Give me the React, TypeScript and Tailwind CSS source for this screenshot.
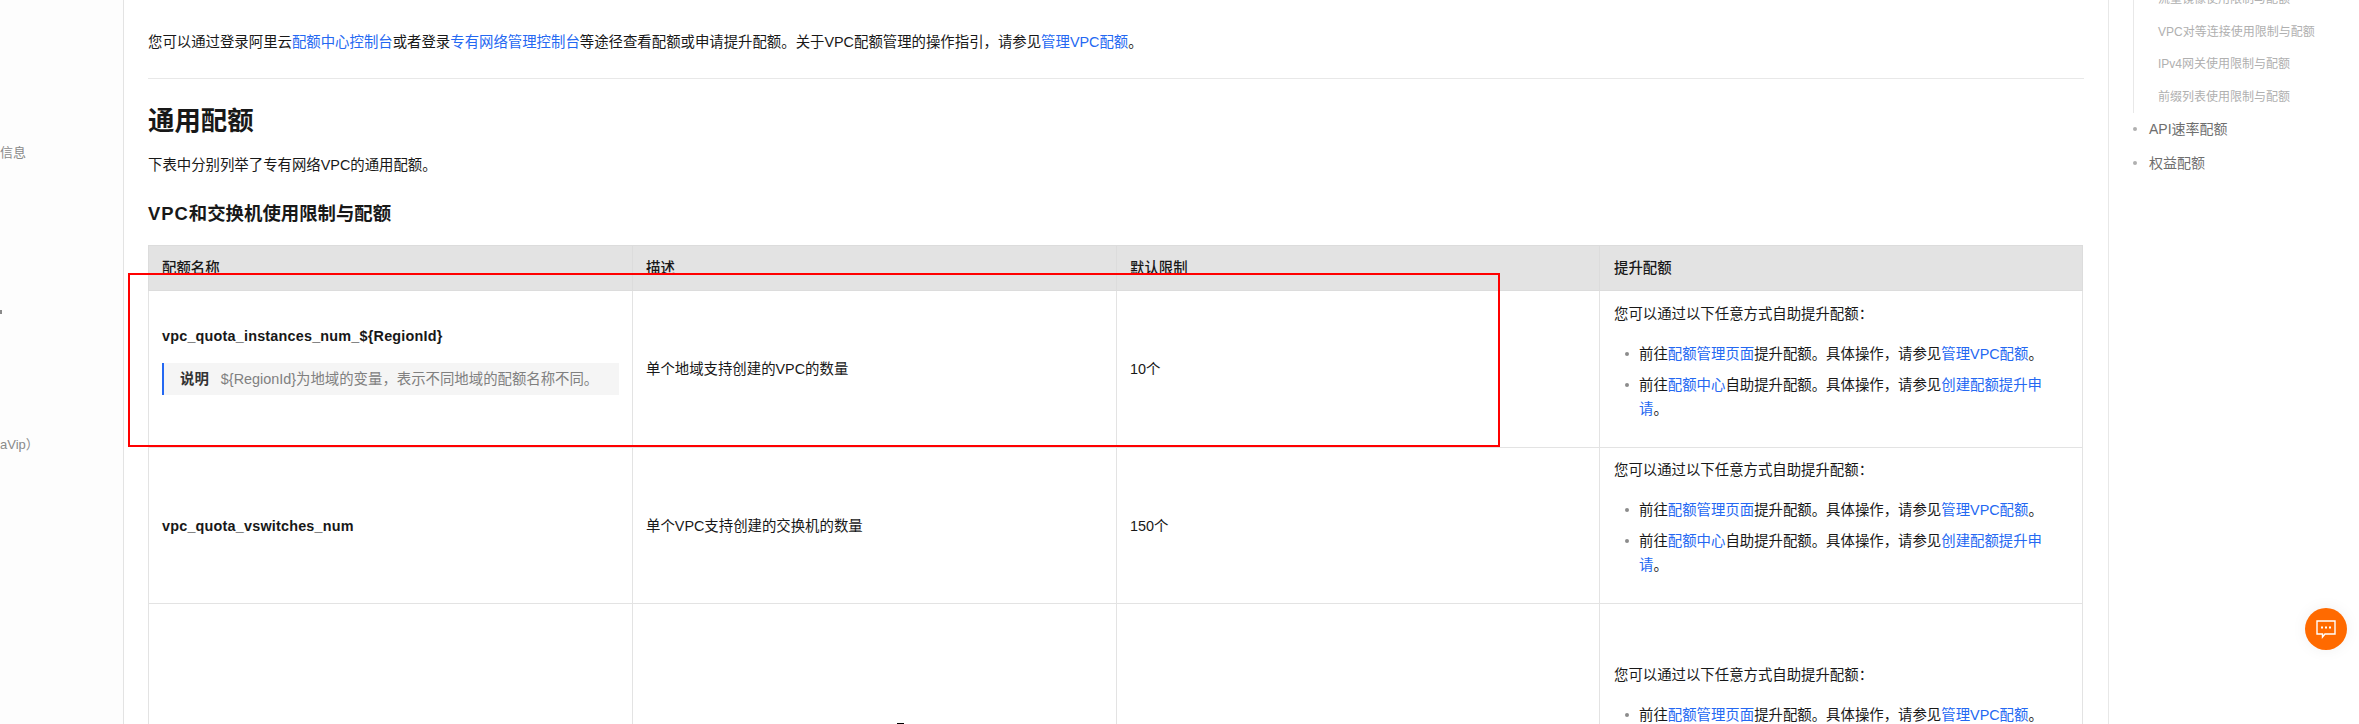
import React from 'react';

const FONT = '[font-family:"Liberation_Sans","Noto_Sans_CJK_SC",sans-serif]';

const A = ({ children }: { children: React.ReactNode }) => <a className="text-[#2468f2]">{children}</a>;

const UpgradeCell = () => (
  <div className="pb-[16px] text-[14.4px] leading-[24px] text-[#181818]">
    <p className="mb-[16px]">您可以通过以下任意方式自助提升配额：</p>
    <ul className="flex flex-col gap-[7px] pl-[25px]">
      <li className="relative">
        <span className="absolute left-[-14px] top-[10px] size-[4px] rounded-full bg-[#8c8c8c]"></span>
        前往<A>配额管理页面</A>提升配额。具体操作，请参见<A>管理VPC配额</A>。
      </li>
      <li className="relative">
        <span className="absolute left-[-14px] top-[10px] size-[4px] rounded-full bg-[#8c8c8c]"></span>
        前往<A>配额中心</A>自助提升配额。具体操作，请参见<A>创建配额提升申请</A>。
      </li>
    </ul>
  </div>
);

const LeftNav = () => (
  <aside className="w-[124px] h-full shrink-0 border-r border-[#e3e3e3] bg-[#fdfdfd] text-[13px] leading-[20px] text-[#8a8a8a] overflow-hidden">
    <div className="mt-[143px] whitespace-nowrap">信息</div>
    <div className="mt-[147px] h-[4px] w-[2px] bg-[#8a8a8a]"></div>
    <div className="mt-[121px] whitespace-nowrap">aVip）</div>
  </aside>
);

const RightNav = () => (
  <aside className="w-[251px] h-full shrink-0 border-l border-[#e8e8e8] overflow-hidden pl-[24px]">
    <ul className="-mt-[17px] border-l border-[#e8e8e8] pl-[24px] text-[12px] leading-[32.5px] text-[#b0b0b0]">
      <li>流量镜像使用限制与配额</li>
      <li>VPC对等连接使用限制与配额</li>
      <li>IPv4网关使用限制与配额</li>
      <li>前缀列表使用限制与配额</li>
    </ul>
    <ul className="-mt-[1px] text-[14px] leading-[34px] text-[#6e6e6e]">
      <li className="flex items-center gap-[12px]">
        <span className="size-[4px] rounded-full bg-[#b0b0b0]"></span>API速率配额
      </li>
      <li className="flex items-center gap-[12px]">
        <span className="size-[4px] rounded-full bg-[#b0b0b0]"></span>权益配额
      </li>
    </ul>
  </aside>
);

const Main = () => (
  <main className="flex-1 min-w-0 h-full overflow-hidden pl-[24px] pr-[24px] pt-[30px] text-[#181818]">
    <p className="text-[14.4px] leading-[24px]">
      您可以通过登录阿里云<A>配额中心控制台</A>或者登录<A>专有网络管理控制台</A>等途径查看配额或申请提升配额。关于VPC配额管理的操作指引，请参见<A>管理VPC配额</A>。
    </p>
    <div className="mt-[24px] border-t border-[#e8e8e8]"></div>
    <h2 className="mt-[24px] text-[26.4px] leading-[36px] font-bold">通用配额</h2>
    <p className="mt-[14px] text-[14.4px] leading-[24px]">下表中分别列举了专有网络VPC的通用配额。</p>
    <h3 className="mt-[23px] text-[18.4px] leading-[28px] font-bold">
      <span className="tracking-[1px]">VPC</span>和交换机使用限制与配额
    </h3>
    <table className="mt-[17px] w-[1935px] table-fixed border-collapse text-[14.4px] leading-[24px]">
      <thead>
        <tr className="h-[45px] bg-[#e3e3e3] text-left">
          <th className="w-[484px] border border-[#dcdcdc] px-[13px] font-medium">配额名称</th>
          <th className="w-[484px] border border-[#dcdcdc] px-[13px] font-medium">描述</th>
          <th className="w-[483px] border border-[#dcdcdc] px-[13px] font-medium">默认限制</th>
          <th className="border border-[#dcdcdc] px-[14px] font-medium">提升配额</th>
        </tr>
      </thead>
      <tbody>
        <tr className="h-[157px]">
          <td className="border border-[#e3e3e3] px-[13px] align-middle">
            <div className="pb-[20px]">
              <div className="font-bold tracking-[0.2px]">vpc_quota_instances_num_${'{'}RegionId{'}'}</div>
              <div className="mt-[15px] flex h-[32px] items-center gap-[12px] border-l-2 border-[#2468f2] bg-[#f5f5f5] pl-[16px]">
                <span className="font-bold text-[#333]">说明</span>
                <span className="text-[#808080]">${'{'}RegionId{'}'}为地域的变量，表示不同地域的配额名称不同。</span>
              </div>
            </div>
          </td>
          <td className="border border-[#e3e3e3] px-[13px]">单个地域支持创建的VPC的数量</td>
          <td className="border border-[#e3e3e3] px-[13px]">10个</td>
          <td className="border border-[#e3e3e3] px-[14px]"><UpgradeCell /></td>
        </tr>
        <tr className="h-[156px]">
          <td className="border border-[#e3e3e3] px-[13px] font-bold tracking-[0.2px]">vpc_quota_vswitches_num</td>
          <td className="border border-[#e3e3e3] px-[13px]">单个VPC支持创建的交换机的数量</td>
          <td className="border border-[#e3e3e3] px-[13px]">150个</td>
          <td className="border border-[#e3e3e3] px-[14px]"><UpgradeCell /></td>
        </tr>
        <tr className="h-[254px]">
          <td className="border border-[#e3e3e3]"></td>
          <td className="border border-[#e3e3e3]"></td>
          <td className="border border-[#e3e3e3]"></td>
          <td className="border border-[#e3e3e3] px-[14px]"><UpgradeCell /></td>
        </tr>
      </tbody>
    </table>
  </main>
);

export default function App() {
  return (
    <div className={`relative flex h-[724px] w-[2359px] overflow-hidden bg-white ${FONT}`}>
      <LeftNav />
      <Main />
      <RightNav />
      {/* annotation drawn on top of the screenshot */}
      <div className="absolute left-[128px] top-[273px] h-[174px] w-[1372px] border-2 border-[#ff0000]"></div>
      <div className="absolute left-[897px] top-[723px] h-[1px] w-[7px] bg-black"></div>
      <button className="absolute left-[2305px] top-[608px] flex size-[42px] items-center justify-center rounded-full bg-[#ff6a00] shadow-[0_0_16px_rgba(0,0,0,0.06)]">
        <svg width="20" height="19" viewBox="0 0 20 19" fill="none">
          <path d="M1 1h18v13H9l-2.5 3v-3H1z" stroke="#fff" strokeWidth="1.4" />
          <rect x="5" y="6.5" width="2" height="2" fill="#fff" />
          <rect x="9" y="6.5" width="2" height="2" fill="#fff" />
          <rect x="13" y="6.5" width="2" height="2" fill="#fff" />
        </svg>
      </button>
    </div>
  );
}
